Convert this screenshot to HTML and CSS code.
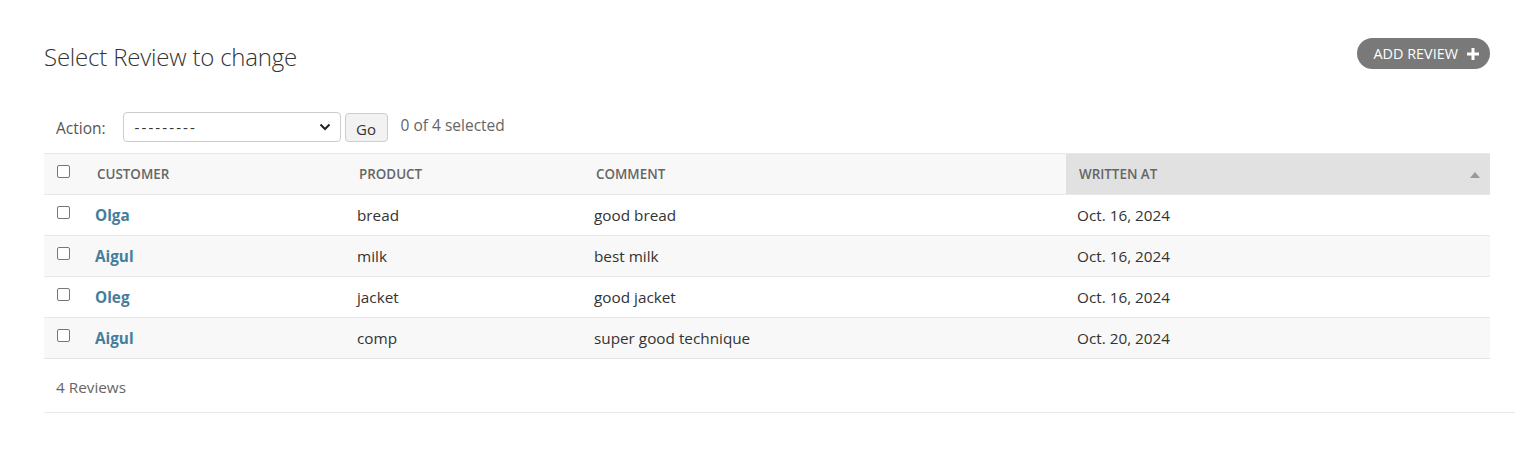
FILE: index.html
```html
<!DOCTYPE html>
<html>
<head>
<meta charset="utf-8">
<link rel="stylesheet" href="styles.css">
</head>
<body>
<div class="content">
  <div class="head">
    <h1 class="title">Select Review to change</h1>
    <a class="addlink" href="#">ADD REVIEW <svg class="plus" width="12" height="12" viewBox="0 0 12 12"><path d="M4.5 0h3v4.5H12v3H7.5V12h-3V7.5H0v-3h4.5z" fill="#fff"/></svg></a>
  </div>
  <div class="changelist">
    <div class="actions">
      <label class="action-label">Action:</label>
      <div class="select">
        <span>---------</span>
        <svg width="12" height="8" viewBox="0 0 12 8"><path d="M1.5 1.5 6 6l4.5-4.5" fill="none" stroke="#222" stroke-width="2"/></svg>
      </div>
      <button class="go">Go</button>
      <span class="counter">0 of 4 selected</span>
    </div>
    <table class="results">
      <thead>
        <tr>
          <th class="c-check"><span class="cb"></span></th>
          <th class="c-cust"><span class="th-t">CUSTOMER</span></th>
          <th class="c-prod"><span class="th-t">PRODUCT</span></th>
          <th class="c-comm"><span class="th-t">COMMENT</span></th>
          <th class="c-date sorted"><div class="th-sort"><span class="th-t">WRITTEN AT</span><span class="arrow"></span></div></th>
        </tr>
      </thead>
      <tbody>
        <tr><td class="c-check"><span class="cb"></span></td><td><a class="name">Olga</a></td><td>bread</td><td>good bread</td><td>Oct. 16, 2024</td></tr>
        <tr class="alt"><td class="c-check"><span class="cb"></span></td><td><a class="name">Aigul</a></td><td>milk</td><td>best milk</td><td>Oct. 16, 2024</td></tr>
        <tr><td class="c-check"><span class="cb"></span></td><td><a class="name">Oleg</a></td><td>jacket</td><td>good jacket</td><td>Oct. 16, 2024</td></tr>
        <tr class="alt"><td class="c-check"><span class="cb"></span></td><td><a class="name">Aigul</a></td><td>comp</td><td>super good technique</td><td>Oct. 20, 2024</td></tr>
      </tbody>
    </table>
    <p class="paginator">4 Reviews</p>
  </div>
</div>
</body>
</html>
```

FILE: styles.css
```css
html, body {
  margin: 0;
  padding: 0;
  background: #fff;
}
body {
  font-family: "Open Sans", "Noto Sans", sans-serif;
  color: #333;
  font-size: 15.3px;
}
.content {
  padding: 38px 5px 0 44px;
}
.head {
  display: flex;
  justify-content: space-between;
  align-items: flex-start;
  width: 1446px;
}
.title {
  margin: 3px 0 0 0;
  font-size: 24px;
  font-weight: 300;
  color: #333;
  line-height: 32px;
  letter-spacing: -0.2px;
}
.addlink {
  display: flex;
  align-items: center;
  gap: 9px;
  height: 31px;
  box-sizing: border-box;
  padding: 0 11px 0 17px;
  border-radius: 16px;
  background: #797979;
  color: #fff;
  font-size: 14.4px;
  text-decoration: none;
}
.plus { display: block; }
.changelist {
  margin-top: 34px;
}
.actions {
  display: flex;
  align-items: flex-start;
  height: 46px;
  padding-left: 12px;
  box-sizing: border-box;
}
.action-label {
  color: #555;
  font-size: 15.5px;
  line-height: 20px;
  margin-top: 11px;
}
.select {
  margin-left: 17px;
  margin-top: 5px;
  width: 218px;
  height: 30px;
  box-sizing: border-box;
  border: 1px solid #ccc;
  border-radius: 4px;
  display: flex;
  align-items: center;
  justify-content: space-between;
  padding: 0 9px 0 11px;
  color: #333;
  font-size: 15px;
}
.select span { letter-spacing: 2.1px; }
.go {
  margin-left: 4px;
  margin-top: 6px;
  width: 43px;
  height: 29px;
  border: 1px solid #ccc;
  border-radius: 4px;
  background: #f2f2f2;
  font-family: inherit;
  font-size: 15px;
  color: #333;
  padding: 3px 0 0 0;
}
.counter {
  margin-left: 13px;
  margin-top: 8px;
  color: #666;
  font-size: 15.5px;
  line-height: 20px;
}
.results {
  border-collapse: collapse;
  width: 1446px;
  border-top: 1px solid #e8e8e8;
}
.results th, .results td {
  text-align: left;
  padding: 0 0 0 11px;
  vertical-align: middle;
}
.results thead th {
  background: #f8f8f8;
  height: 40px;
  border-bottom: 1px solid #e8e8e8;
  color: #666;
  font-size: 13.4px;
  font-weight: 600;
}
.results thead th.sorted {
  background: #e1e1e1;
}
.th-t { padding-left: 2px; }
.th-sort {
  display: flex;
  align-items: center;
  justify-content: space-between;
  padding-right: 10px;
}
.arrow {
  width: 0;
  height: 0;
  border-left: 5px solid transparent;
  border-right: 5px solid transparent;
  border-bottom: 6px solid #999;
  margin-top: 2px;
}
.results .c-check { width: 27px; padding-left: 13px; }
.c-cust { width: 251px; }
.c-prod { width: 226px; }
.c-comm { width: 472px; }
.results tbody td {
  height: 40px;
  border-bottom: 1px solid #e8e8e8;
  color: #333;
}
.results tbody tr.alt td { background: #f8f8f8; }
.results tbody tr:last-child td { border-bottom: 1px solid #e4e4e4; }
.cb {
  display: block;
  width: 11px;
  height: 11px;
  border: 1px solid #767676;
  border-radius: 2px;
  background: #fff;
  margin-top: -5px;
}
.name {
  color: #447e9b;
  font-weight: 700;
  text-decoration: none;
}
.paginator {
  margin: 0;
  width: 1471px;
  height: 54px;
  line-height: 56px;
  padding-left: 12px;
  box-sizing: border-box;
  border-bottom: 1px solid #e8e8e8;
  color: #666;
  font-size: 15.3px;
}
```
